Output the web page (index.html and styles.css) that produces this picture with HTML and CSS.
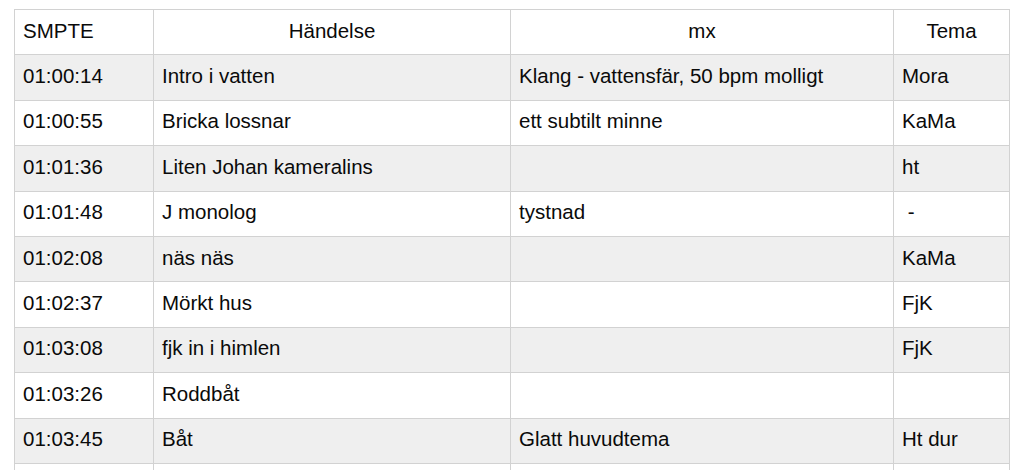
FILE: index.html
```html
<!DOCTYPE html>
<html lang="sv">
<head>
<meta charset="utf-8">
<link rel="stylesheet" href="styles.css">
</head>
<body>
<table class="grid">
  <colgroup>
    <col class="c1"><col class="c2"><col class="c3"><col class="c4">
  </colgroup>
  <thead>
    <tr><th class="left">SMPTE</th><th>Händelse</th><th>mx</th><th>Tema</th></tr>
  </thead>
  <tbody>
    <tr><td>01:00:14</td><td>Intro i vatten</td><td>Klang - vattensfär, 50 bpm molligt</td><td>Mora</td></tr>
    <tr><td>01:00:55</td><td>Bricka lossnar</td><td>ett subtilt minne</td><td>KaMa</td></tr>
    <tr><td>01:01:36</td><td>Liten Johan kameralins</td><td></td><td>ht</td></tr>
    <tr><td>01:01:48</td><td>J monolog</td><td>tystnad</td><td>&nbsp;-</td></tr>
    <tr><td>01:02:08</td><td>näs näs</td><td></td><td>KaMa</td></tr>
    <tr><td>01:02:37</td><td>Mörkt hus</td><td></td><td>FjK</td></tr>
    <tr><td>01:03:08</td><td>fjk in i himlen</td><td></td><td>FjK</td></tr>
    <tr><td>01:03:26</td><td>Roddbåt</td><td></td><td></td></tr>
    <tr><td>01:03:45</td><td>Båt</td><td>Glatt huvudtema</td><td>Ht dur</td></tr>
    <tr><td></td><td></td><td></td><td></td></tr>
  </tbody>
</table>
</body>
</html>
```
FILE: styles.css
```css
html, body {
  margin: 0;
  padding: 0;
  background: #ffffff;
  overflow: hidden;
}
body {
  padding: 9px 0 0 14px;
  font-family: "Liberation Sans", Arial, sans-serif;
  font-size: 20.5px;
  color: #0a0a0a;
}
.grid {
  border-collapse: collapse;
  table-layout: fixed;
  width: 995px;
}
.c1 { width: 139px; }
.c2 { width: 357px; }
.c3 { width: 383px; }
.c4 { width: 116px; }
.grid th, .grid td {
  border: 1px solid #d2d2d2;
  height: 45.4px;
  padding: 0 0 3px 8px;
  box-sizing: border-box;
  vertical-align: middle;
  white-space: nowrap;
  overflow: hidden;
  font-weight: normal;
  text-align: left;
}
.grid th {
  text-align: center;
  padding: 0 0 3px 0;
}
.grid th.left {
  text-align: left;
  padding-left: 8px;
}
.grid tbody tr:nth-child(odd) {
  background: #efefef;
}
```
